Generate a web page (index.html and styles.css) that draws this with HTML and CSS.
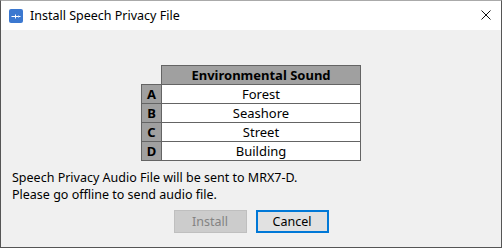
FILE: index.html
```html
<!DOCTYPE html>
<html>
<head>
<meta charset="utf-8">
<link rel="stylesheet" href="styles.css">
</head>
<body>
<div class="window">
  <div class="titlebar">
    <svg class="app-icon" width="14" height="14" viewBox="0 0 14 14">
      <rect x="0" y="0" width="14" height="14" rx="2" fill="#3b78d0"/>
      <path d="M2.5 7.5 H11.5" stroke="#fff" stroke-width="1"/>
      <path d="M6.5 5.5 V9.5" stroke="#fff" stroke-width="1"/>
      <path d="M9.5 6.5 V8.5" stroke="#dfe9f8" stroke-width="1"/>
    </svg>
    <span class="title">Install Speech Privacy File</span>
    <svg class="close" width="10" height="10" viewBox="0 0 10 10">
      <path d="M0.5 0.5 L9.5 9.5 M9.5 0.5 L0.5 9.5" stroke="#111" stroke-width="1"/>
    </svg>
  </div>
  <div class="content">
    <table class="sounds">
      <tr><td class="blank"></td><th>Environmental Sound</th></tr>
      <tr><td class="key">A</td><td>Forest</td></tr>
      <tr><td class="key">B</td><td>Seashore</td></tr>
      <tr><td class="key">C</td><td>Street</td></tr>
      <tr><td class="key">D</td><td>Building</td></tr>
    </table>
    <p class="msg">Speech Privacy Audio File will be sent to MRX7-D.<br>Please go offline to send audio file.</p>
    <div class="buttons">
      <button class="btn disabled" disabled>Install</button>
      <button class="btn primary">Cancel</button>
    </div>
  </div>
</div>
</body>
</html>
```
FILE: styles.css
```css
html, body {
  margin: 0;
  padding: 0;
}
body {
  font-family: "Noto Sans", "Open Sans", sans-serif;
  color: #000;
}
.window {
  box-sizing: border-box;
  width: 502px;
  height: 248px;
  border: 1px solid #555;
  border-top-color: #aaa;
  background: #f0f0f0;
  display: flex;
  flex-direction: column;
}
.titlebar {
  height: 29px;
  background: #fff;
  display: flex;
  align-items: center;
  padding-left: 8px;
  padding-right: 10px;
}
.app-icon {
  margin-right: 7px;
  margin-top: 1px;
}
.title {
  font-size: 12.5px;
  flex: 1;
}
.close {
  margin-top: -1px;
}
.content {
  flex: 1;
  display: flex;
  flex-direction: column;
  padding: 35px 11px 0 11px;
}
.sounds {
  border-collapse: collapse;
  margin: 0 auto;
  font-size: 13px;
}
.sounds th, .sounds td {
  border: 1px solid #646464;
  height: 18px;
  padding: 0;
  line-height: 16px;
  text-align: center;
  background: #fff;
}
.sounds th {
  background: #a0a0a0;
  width: 198px;
  font-weight: bold;
}
.sounds td.key {
  background: #a0a0a0;
  width: 19px;
  font-weight: bold;
}
.sounds td.blank {
  background: transparent;
  border-top-color: transparent;
  border-left-color: transparent;
}
.msg {
  margin: 8px 0 0 0;
  font-size: 12.5px;
  line-height: 17px;
}
.buttons {
  display: flex;
  justify-content: center;
  gap: 9px;
  margin-top: 7px;
}
.btn {
  box-sizing: border-box;
  width: 73px;
  height: 23px;
  font-family: inherit;
  font-size: 12.5px;
  padding: 0;
}
.btn.disabled {
  background: #cccccc;
  border: 1px solid #bfbfbf;
  color: #838383;
}
.btn.primary {
  background: #e1e1e1;
  border: 2px solid #0078d7;
  color: #000;
}
```
